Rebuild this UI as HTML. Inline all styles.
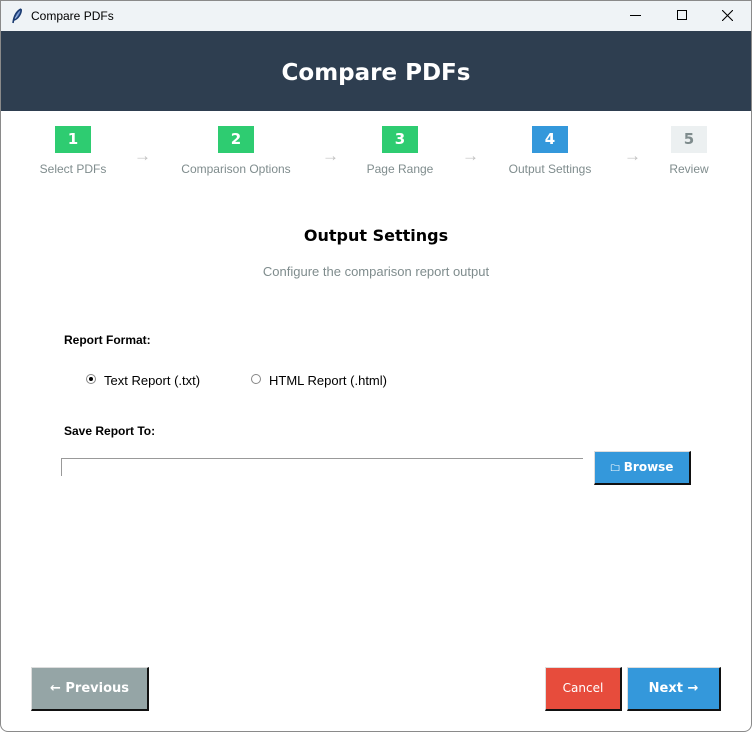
<!DOCTYPE html>
<html><head><meta charset="utf-8"><style>
*{margin:0;padding:0;box-sizing:border-box}
body{width:752px;height:732px;overflow:hidden;background:#fff;font-family:"Liberation Sans",sans-serif;position:relative}
.abs{position:absolute}
.frame{position:absolute;left:0;top:0;width:752px;height:732px;border:1px solid #8a8a8a;border-radius:0 0 8px 8px;pointer-events:none;z-index:10}
.title{position:absolute;left:0;top:0;width:752px;height:31px;background:#eff3f6}
.hdr{position:absolute;left:0;top:31px;width:752px;height:80px;background:#2e3e50;color:#fff;font-weight:bold;font-size:23px;text-align:center;line-height:84px;font-family:"DejaVu Sans",sans-serif}
.box{position:absolute;top:126px;width:36px;height:27px;color:#fff;font-weight:bold;font-size:15px;text-align:center;line-height:27px;font-family:"DejaVu Sans",sans-serif}
.lbl{position:absolute;top:162px;font-size:12px;color:#7f8c8d;text-align:center;width:160px;margin-left:-80px}
.arr{position:absolute;top:146px;font-size:17px;color:#c0c0c0}
.btn{position:absolute;color:#fff;font-weight:bold;font-size:13px;text-align:center;border-right:2px solid #111;border-bottom:2px solid #111;border-top:1px solid #ddd;border-left:1px solid #ddd;font-family:"DejaVu Sans",sans-serif}
</style></head><body>
<div class="title">
 <svg class="abs" style="left:11px;top:8px" width="12" height="16" viewBox="0 0 12 16"><path d="M10 1 C6 3 3 7 2 15 M10 1 C11 5 7 11 3 12" stroke="#1a3a70" stroke-width="1.6" fill="#5a7fc0"/></svg>
 <div class="abs" style="left:31px;top:9px;font-size:12px;color:#000">Compare PDFs</div>
 <div class="abs" style="left:630px;top:15px;width:11px;height:1px;background:#000"></div>
 <div class="abs" style="left:677px;top:10px;width:10px;height:10px;border:1px solid #000"></div>
 <svg class="abs" style="left:722px;top:10px" width="11" height="11"><path d="M0 0L11 11M11 0L0 11" stroke="#000" stroke-width="1.1"/></svg>
</div>
<div class="hdr">Compare PDFs</div>
<div class="box" style="left:55px;background:#2ecc71">1</div>
<div class="box" style="left:218px;background:#2ecc71">2</div>
<div class="box" style="left:382px;background:#2ecc71">3</div>
<div class="box" style="left:532px;background:#3498db">4</div>
<div class="box" style="left:671px;background:#ecf0f1;color:#7f8c8d">5</div>
<div class="lbl" style="left:73px">Select PDFs</div>
<div class="lbl" style="left:236px">Comparison Options</div>
<div class="lbl" style="left:400px">Page Range</div>
<div class="lbl" style="left:550px">Output Settings</div>
<div class="lbl" style="left:689px">Review</div>
<div class="arr" style="left:134px">→</div>
<div class="arr" style="left:322px">→</div>
<div class="arr" style="left:462px">→</div>
<div class="arr" style="left:624px">→</div>
<div class="abs" style="left:0;top:226px;width:752px;text-align:center;font-weight:bold;font-size:16px;color:#000;font-family:'DejaVu Sans',sans-serif">Output Settings</div>
<div class="abs" style="left:0;top:264px;width:752px;text-align:center;font-size:13px;color:#7f8c8d">Configure the comparison report output</div>
<div class="abs" style="left:64px;top:333px;font-weight:bold;font-size:12px">Report Format:</div>
<div class="abs" style="left:86px;top:374px;width:10px;height:10px;border-radius:50%;border:1px solid #888;background:#fff"><div style="position:absolute;left:2px;top:2px;width:4px;height:4px;border-radius:50%;background:#000"></div></div>
<div class="abs" style="left:104px;top:373px;font-size:13px">Text Report (.txt)</div>
<div class="abs" style="left:251px;top:374px;width:10px;height:10px;border-radius:50%;border:1px solid #888;background:#fff"></div>
<div class="abs" style="left:269px;top:373px;font-size:13px">HTML Report (.html)</div>
<div class="abs" style="left:64px;top:424px;font-weight:bold;font-size:12px">Save Report To:</div>
<div class="abs" style="left:61px;top:458px;width:522px;height:18px;border-top:1px solid #999;border-left:1px solid #999"></div>
<div class="btn" style="left:594px;top:451px;width:97px;height:34px;background:#3498db;line-height:31px;font-size:12px"><span style="font-size:9px">🗀</span> Browse</div>
<div class="btn" style="left:31px;top:667px;width:118px;height:44px;background:#95a5a6;line-height:41px">← Previous</div>
<div class="btn" style="left:545px;top:667px;width:77px;height:44px;background:#e74c3c;line-height:41px;font-weight:normal;font-size:12px">Cancel</div>
<div class="btn" style="left:627px;top:667px;width:94px;height:44px;background:#3498db;line-height:41px">Next →</div>
<div class="frame"></div>
</body></html>
